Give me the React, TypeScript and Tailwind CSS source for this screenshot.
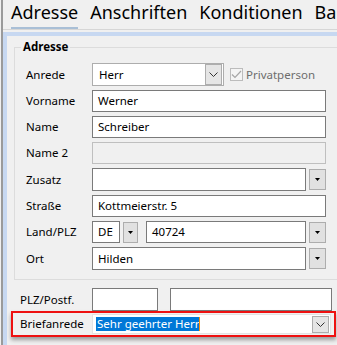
import React from 'react';

const Arrow = () => (
  <svg width="5" height="3" viewBox="0 0 5 3">
    <polygon points="0,0 5,0 2.5,3" fill="#000" />
  </svg>
);

const Chevron = () => (
  <svg width="9" height="5" viewBox="0 0 9 5">
    <polyline points="0.5,0.5 4.5,4.5 8.5,0.5" fill="none" stroke="#333" strokeWidth="1" />
  </svg>
);

const DropButton = ({ w = 17 }: { w?: number }) => (
  <div
    className="flex items-center justify-center bg-[#e1e1e1] border border-[#adadad] h-[21px] shrink-0"
    style={{ width: w }}
  >
    <Arrow />
  </div>
);

const TextBox = ({ value = '', className = '' }: { value?: string; className?: string }) => (
  <div className={`flex items-center bg-white border border-[#7a7a7a] pl-[5px] text-black ${className}`}>
    {value}
  </div>
);

const Row = ({ label, h = 22, children }: { label: string; h?: number; children: React.ReactNode }) => (
  <div className="flex items-center" style={{ height: h }}>
    <div className="w-[66px] shrink-0">{label}</div>
    {children}
  </div>
);

export default function App() {
  return (
    <div className="w-[337px] h-[345px] overflow-hidden bg-[#f0f0f0] font-['Noto_Sans',sans-serif] text-[11.5px] text-black">
      <div className="ml-[1px] h-full border-l-2 border-[#9a9a9a] flex flex-col">
        {/* tabs */}
        <div className="h-[30px] shrink-0 border-b border-[#d6d6d6] flex pl-[8px] gap-[12px] text-[18px] whitespace-nowrap">
          <div className="h-[29px] leading-[25px] border-b-2 border-[#a9bfd6]">Adresse</div>
          <div className="leading-[25px]">Anschriften</div>
          <div className="leading-[25px]">Konditionen</div>
          <div className="leading-[25px]">Ba</div>
        </div>

        <div className="mt-[2px] flex-1 border-t-4 border-l-4 border-[#c7d8f1] flex flex-col">
          <fieldset className="mt-[3px] ml-[7px] mr-[-20px] border border-[#dcdcdc] pl-[11px] pt-[8px] pb-[9px]">
            <legend className="ml-[-5px] px-[2px] font-bold leading-[16px]">Adresse</legend>
            <div className="flex flex-col gap-[4px]">
              <Row label="Anrede" h={23}>
                <div className="w-[132px] h-[23px] flex items-center bg-white border border-[#adadad] pl-[6px] pr-[1px]">
                  <span className="flex-1">Herr</span>
                  <div className="w-[17px] h-[21px] bg-[#e5e5e5] border border-[#adadad] flex items-center justify-center">
                    <Chevron />
                  </div>
                </div>
                <div className="ml-[6px] w-[13px] h-[13px] border border-[#bcbcbc] bg-[#f4f4f4] flex items-center justify-center">
                  <svg width="11" height="9" viewBox="0 0 11 9">
                    <polyline points="1,4.5 4,7.5 10,1" fill="none" stroke="#a6a6a6" strokeWidth="1.2" />
                  </svg>
                </div>
                <span className="ml-[3px] text-[#6d6d6d]">Privatperson</span>
              </Row>
              <Row label="Vorname">
                <TextBox value="Werner" className="w-[234px] h-[22px]" />
              </Row>
              <Row label="Name">
                <TextBox value="Schreiber" className="w-[234px] h-[22px]" />
              </Row>
              <Row label="Name 2">
                <div className="w-[234px] h-[22px] bg-[#f0f0f0] border border-[#bfbfbf]" />
              </Row>
              <Row label="Zusatz" h={23}>
                <TextBox className="w-[214px] h-[23px]" />
                <div className="ml-[3px]"><DropButton /></div>
              </Row>
              <Row label="Straße">
                <TextBox value="Kottmeierstr. 5" className="w-[234px] h-[22px]" />
              </Row>
              <Row label="Land/PLZ">
                <TextBox value="DE" className="w-[28px] h-[22px]" />
                <div className="ml-[3px]"><DropButton w={15} /></div>
                <TextBox value="40724" className="ml-[8px] w-[160px] h-[22px]" />
                <div className="ml-[3px]"><DropButton /></div>
              </Row>
              <Row label="Ort" h={23}>
                <TextBox value="Hilden" className="w-[214px] h-[23px]" />
                <div className="ml-[3px]"><DropButton /></div>
              </Row>
            </div>
          </fieldset>

          <div className="mt-[8px] pl-[13px] flex items-center h-[23px]">
            <div className="w-[72px] shrink-0">PLZ/Postf.</div>
            <TextBox className="w-[66px] h-[23px]" />
            <TextBox className="ml-[12px] w-[162px] h-[23px]" />
          </div>

          <div className="ml-[4px] w-[325px] h-[26px] border-2 border-[#ee1111] shadow-[0_3px_4px_rgba(0,0,0,0.35)] flex items-center pl-[7px]">
            <div className="w-[72px] shrink-0">Briefanrede</div>
            <div className="w-[239px] h-[20px] flex items-center bg-white border border-[#e3e3e3] pl-[3px] pr-[1px]">
              <div className="flex-1 flex items-center">
                <span className="bg-[#0078d7] text-white leading-[14px] pl-[1px]">Sehr geehrter Herr</span>
                <span className="w-[1px] h-[14px] bg-[#ff8c00]" />
              </div>
              <div className="w-[17px] h-[17px] bg-[#e5e5e5] border border-[#adadad] flex items-center justify-center">
                <Chevron />
              </div>
            </div>
          </div>
        </div>
      </div>
    </div>
  );
}
